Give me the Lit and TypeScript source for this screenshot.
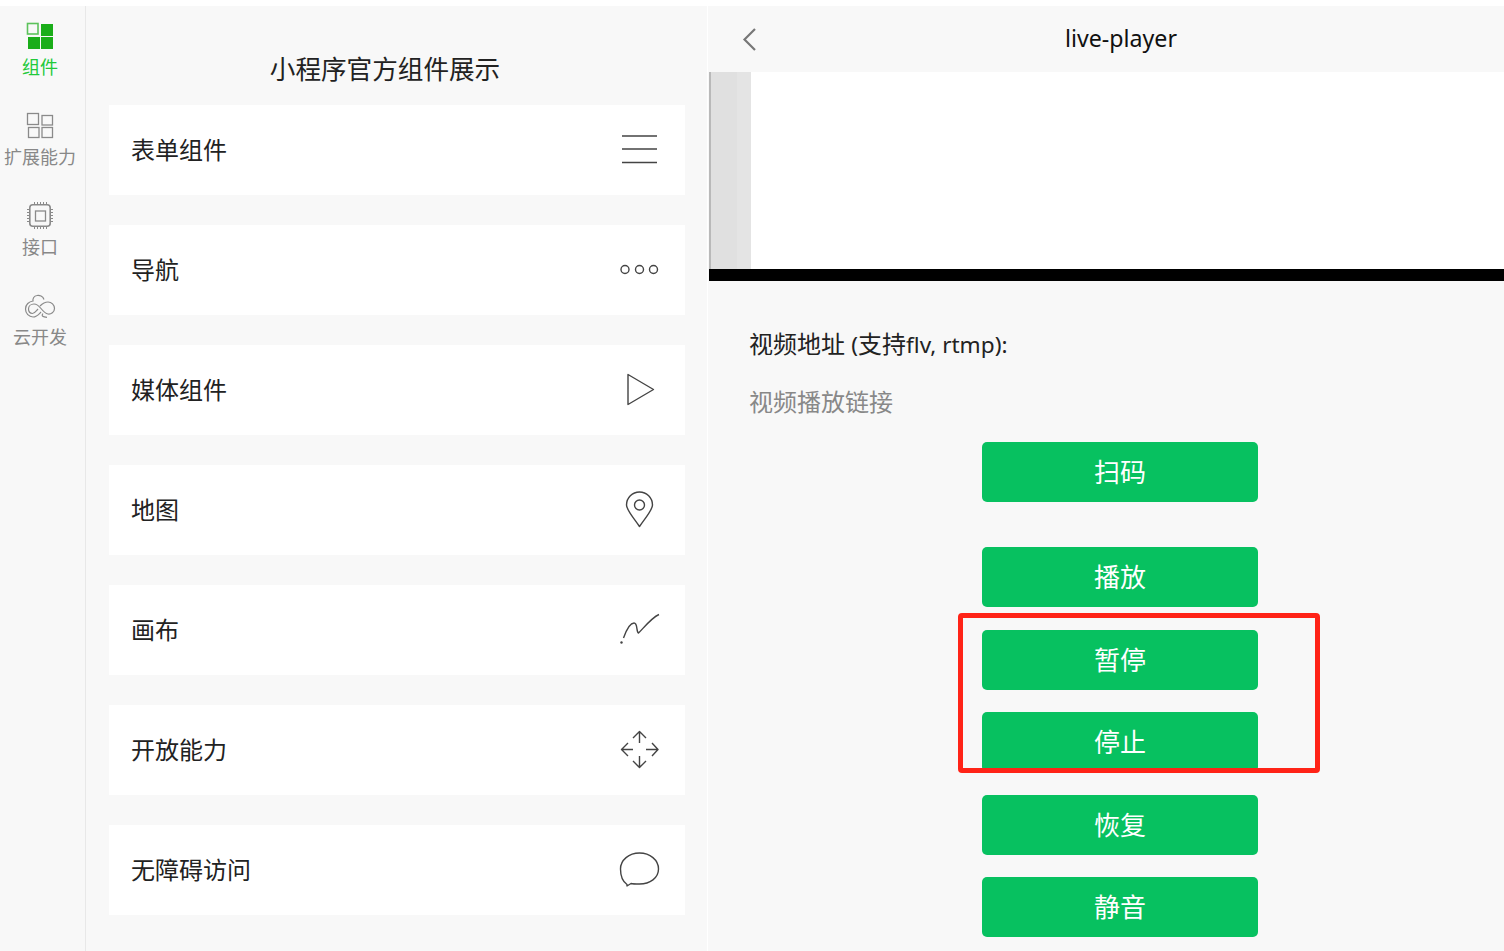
import { LitElement, html, svg, css } from "lit";
import { customElement } from "lit/decorators.js";

const tabs = [
  { label: "组件", on: true, icon: html`<svg class="ti" viewBox="0 0 32 32"><rect x="3.500" y="3.500" width="10.500" height="10.500" fill="none" stroke="#5cc25b" stroke-width="1.6"/><rect x="17" y="4" width="12" height="12" fill="#1aad19"/><rect x="4" y="17" width="12" height="12" fill="#1aad19"/><rect x="17" y="17" width="12" height="12" fill="#1aad19"/></svg>` },
  { label: "扩展能力", on: false, icon: html`<svg class="ti" viewBox="0 0 32 32" fill="none" stroke="#8a8a8a" stroke-width="1.3"><rect x="3.500" y="3.500" width="11" height="11"/><rect x="18" y="5.500" width="10.500" height="9.500"/><rect x="4.500" y="17.500" width="10.500" height="10"/><rect x="18" y="17.500" width="10.500" height="10"/></svg>` },
  { label: "接口", on: false, icon: html`<svg class="ti" viewBox="0 0 32 32" fill="none" stroke="#8a8a8a" stroke-width="1.3"><rect x="5.800" y="4.800" width="20.400" height="21.400" rx="3" stroke-width="1.6"/><rect x="11.500" y="11" width="10" height="10"/><path d="M3 9.500h3M3 12.500h3M3 15.500h3M3 18.500h3M3 21.500h3M26 9.500h3M26 12.500h3M26 15.500h3M26 18.500h3M26 21.500h3M10.500 2v3M13.500 2v3M16.500 2v3M19.500 2v3M22.500 2v3M10.500 26v3M13.500 26v3M16.500 26v3M19.500 26v3M22.500 26v3" stroke-width="1"/></svg>` },
  { label: "云开发", on: false, icon: html`<svg class="ti" viewBox="0 0 32 32" fill="none" stroke="#8a8a8a" stroke-width="1.2"><path d="M20 9.500C19 6 15.500 5 13 5.500 10 6 8.500 8.500 9 11 5 11.500 1.500 14.500 1.500 19 1.500 23.500 5 27 9 27 13 27 15 24 17 22"/><path d="M14 19C12 21 10.500 23.500 8.500 23.500 6 23.500 4.500 21.500 4.500 19 4.500 16 7 14 10 14 13 14 15 16 17 18.500 19 21 21 23.500 24 24 27 24.500 30.500 22 30.500 18.500 30.500 15 27.500 12 24 12 20.500 12 18 14 16 16"/><path d="M19 23.500C17 26 19 27 23 27.300"/></svg>` },
];

const cards = [
  { label: "表单组件", icon: svg`<path d="M622 136h35M622 149h35M622 162.500h35"/>` },
  { label: "导航", icon: svg`<circle cx="625" cy="269.500" r="4"/><circle cx="639.500" cy="269.500" r="4"/><circle cx="653.500" cy="269.500" r="4"/>` },
  { label: "媒体组件", icon: svg`<path d="M628 374.500 653.500 389.500 628 404.500Z" stroke-linejoin="round"/>` },
  { label: "地图", icon: svg`<path d="M639.500 526.500C633 517 626.500 510 626.500 505A13 13 0 0 1 652.500 505C652.500 510 646 517 639.500 526.500Z" stroke-linejoin="round"/><circle cx="639.500" cy="505" r="5"/>` },
  { label: "画布", icon: svg`<path d="M623.500 638C626 631 630 623 634 623C638 623 636 632 638.500 633C642 630 651 618 659 614.500"/><circle cx="621.500" cy="642.500" r="1.200" fill="#444" stroke="none"/>` },
  { label: "开放能力", icon: svg`<path d="M639.500 732V743M633 738 639.500 731.500 646 738M639.500 756V767M633 761 639.500 767.500 646 761M622 749.500H633M628 743 621.500 749.500 628 756M646 749.500H657.500M652 743 658 749.500 652 756" stroke-linejoin="round"/>` },
  { label: "无障碍访问", icon: svg`<path d="M627 884.500C622 881 620.500 875 620.500 869C620.500 860 629 853 639.500 853C650 853 658.500 860 658.500 869C658.500 878 650 884 639.500 884C636 884 633 884 631 883.500L627 886Z" stroke-linejoin="round"/>` },
];

const buttons = ["扫码", "播放", "暂停", "停止", "恢复", "静音"];

@customElement("app-root")
export class AppRoot extends LitElement {
  static styles = css`
    :host {
      display: block;
      height: 100vh;
      overflow: hidden;
      position: relative;
      background: #f8f8f8;
      font-family: "Noto Sans", "Noto Sans CJK SC", sans-serif;
      color: #222;
    }
    .strip { height: 6px; background: #fff; }
    .layout { display: flex; height: 945px; }
    .side {
      width: 80px;
      padding-right: 5px;
      flex: none;
      border-right: 1px solid #e8e8e8;
    }
    .tab {
      height: 90px;
      box-sizing: border-box;
      padding-top: 14px;
      display: flex;
      flex-direction: column;
      align-items: center;
    }
    .ti { width: 32px; height: 32px; display: block; }
    .tl { font-size: 18px; line-height: 24px; margin-top: 3px; color: #888; white-space: nowrap; }
    .tab.on .tl { color: #22c93a; }
    .mid {
      width: 621px;
      flex: none;
      border-right: 1px solid #fff;
    }
    .title {
      height: 99px;
      box-sizing: border-box;
      padding: 47px 23px 0 0;
      text-align: center;
      font-size: 25.6px;
      line-height: 34px;
    }
    .cards {
      display: flex;
      flex-direction: column;
      gap: 30px;
      margin: 0 22px 0 23px;
    }
    .card {
      height: 90px;
      box-sizing: border-box;
      background: #fff;
      display: flex;
      align-items: center;
      padding: 0 0 4px 22px;
      font-size: 24px;
      position: relative;
    }
    .ci {
      position: absolute;
      left: 0;
      top: 0;
      width: 100%;
      height: 100%;
      pointer-events: none;
      fill: none;
      stroke: #444;
      stroke-width: 1.4;
    }
    .right { flex: none; width: 824px; }
    .nav {
      height: 66px;
      box-sizing: border-box;
      padding: 0 0 2px 2px;
      position: relative;
      display: flex;
      align-items: center;
      justify-content: center;
      font-size: 23.2px;
      color: #111;
    }
    .back {
      position: absolute;
      left: 34px;
      top: 20px;
      width: 20px;
      height: 28px;
      fill: none;
      stroke: #777;
      stroke-width: 2.2;
    }
    .video {
      height: 209px;
      background: #000;
      margin-left: 1px;
    }
    .frame {
      height: 197px;
      background: #fff;
      display: flex;
    }
    .g1 { width: 2px; background: #b9b9b9; }
    .g2 { width: 26px; background: #e0e0e0; }
    .g3 { width: 14px; background: #e4e4e4; }
    .form { padding-top: 48px; }
    .addr { font-size: 24px; line-height: 29px; height: 32px; color: #222; margin-left: 41px; }
    .lat { font-size: 22.6px; }
    .ph { font-size: 24px; line-height: 32px; color: #888; margin: 25px 0 0 41px; }
    .btns {
      display: flex;
      flex-direction: column;
      align-items: center;
      gap: 22.5px;
      margin-top: 24px;
    }
    button {
      width: 276px;
      height: 60px;
      flex: none;
      border: 0;
      border-radius: 5px;
      background: #07c160;
      color: #fff;
      font: inherit;
      font-size: 26px;
      padding: 0 0 2px;
    }
    button.first { margin-bottom: 22.500px; }
    .mark {
      position: absolute;
      left: 958px;
      top: 613px;
      width: 362px;
      height: 160px;
      box-sizing: border-box;
      border: 5px solid #ff2317;
      border-radius: 4px;
      pointer-events: none;
    }
  `;

  render() {
    return html`
      <div class="strip"></div>
      <div class="layout">
        <div class="side">
          ${tabs.map(
            (t) => html`<div class="tab ${t.on ? "on" : ""}">${t.icon}<div class="tl">${t.label}</div></div>`
          )}
        </div>
        <div class="mid">
          <div class="title">小程序官方组件展示</div>
          <div class="cards">
            ${cards.map(
              (c, i) => html`<div class="card">
                <span>${c.label}</span>
                <svg class="ci" viewBox="109 ${105 + i * 120} 576 90">${c.icon}</svg>
              </div>`
            )}
          </div>
        </div>
        <div class="right">
          <div class="nav">
            <svg class="back" viewBox="0 0 20 28"><path d="M13 3 2.500 13.500 13 24"/></svg>
            <span>live-player</span>
          </div>
          <div class="video">
            <div class="frame">
              <div class="g1"></div><div class="g2"></div><div class="g3"></div>
            </div>
          </div>
          <div class="form">
            <div class="addr">视频地址 <span class="lat">(</span>支持<span class="lat">flv, rtmp):</span></div>
            <div class="ph">视频播放链接</div>
            <div class="btns">
              ${buttons.map((b, i) => html`<button class=${i === 0 ? "first" : ""}>${b}</button>`)}
            </div>
          </div>
        </div>
      </div>
      <div class="mark"></div>
    `;
  }
}
